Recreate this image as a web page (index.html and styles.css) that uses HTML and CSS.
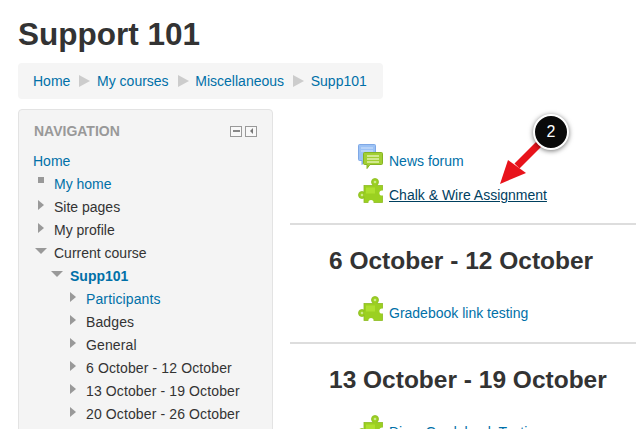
FILE: index.html
```html
<!DOCTYPE html>
<html lang="en">
<head>
    <meta charset="UTF-8">
    <title>Support 101</title>
    <link rel="stylesheet" href="styles.css">
</head>
<body>
    <svg width="0" height="0" class="defs">
        <symbol id="puzzle" viewBox="0 0 25 25">
            <circle cx="17" cy="4" r="3.500" fill="#9bd021" stroke="#8dbb22" stroke-width="0.800"/>
            <circle cx="4" cy="17" r="3.500" fill="#9bd021" stroke="#8dbb22" stroke-width="0.800"/>
            <rect x="6" y="7.500" width="18.500" height="17" fill="#9bd021" stroke="#8dbb22" stroke-width="0.800"/>
            <rect x="15.500" y="6" width="3" height="3" fill="#9bd021"/>
            <rect x="6" y="15.500" width="2" height="3" fill="#9bd021"/>
            <circle cx="17" cy="4" r="1.300" fill="#cdea8a"/>
            <circle cx="4" cy="17" r="1.300" fill="#cdea8a"/>
            <circle cx="24" cy="15" r="2.600" fill="white"/>
            <circle cx="13" cy="24.500" r="2.600" fill="white"/>
            <path d="M8 9.500h9v6H8z" fill="#aee02f"/>
        </symbol>
        <symbol id="forum" viewBox="0 0 25 25">
            <path d="M1.500.5h15a1 1 0 0 1 1 1v14a1 1 0 0 1-1 1H7l-3 4v-4H1.500a1 1 0 0 1-1-1v-14a1 1 0 0 1 1-1z" fill="#9cc2f5" stroke="#7fa8e6"/>
            <path d="M3 4h12M3 7h12" stroke="#d3e4fb" stroke-width="1.200"/>
            <path d="M6.500 8.500h17a1 1 0 0 1 1 1v10a1 1 0 0 1-1 1H12l-3 4v-4H6.500a1 1 0 0 1-1-1v-10a1 1 0 0 1 1-1z" fill="#a2cf33" stroke="#86b422"/>
            <path d="M9 12h12M9 15h12M9 18h12" stroke="#e2f2ae" stroke-width="1.400"/>
        </symbol>
    </svg>

    <h1 class="page-title">Support 101</h1>

    <div class="breadcrumb">
        <a href="#">Home</a><span class="sep"></span>
        <a href="#">My courses</a><span class="sep"></span>
        <a href="#">Miscellaneous</a><span class="sep"></span>
        <a href="#">Supp101</a>
    </div>

    <div class="columns">
        <div class="block">
            <div class="block-head">
                <h2>NAVIGATION</h2>
                <div class="block-actions">
                    <span class="action"><span class="minus"></span></span>
                    <span class="action"><span class="left"></span></span>
                </div>
            </div>
            <div class="tree">
                <div class="row"><a href="#">Home</a></div>
                <div class="row lvl1"><span class="mark square"></span><a href="#">My home</a></div>
                <div class="row lvl1"><span class="mark closed"></span>Site pages</div>
                <div class="row lvl1"><span class="mark closed"></span>My profile</div>
                <div class="row lvl1"><span class="mark open"></span>Current course</div>
                <div class="row lvl2"><span class="mark open"></span><a href="#" class="strong">Supp101</a></div>
                <div class="row lvl3"><span class="mark closed"></span><a href="#">Participants</a></div>
                <div class="row lvl3"><span class="mark closed"></span>Badges</div>
                <div class="row lvl3"><span class="mark closed"></span>General</div>
                <div class="row lvl3"><span class="mark closed"></span>6 October - 12 October</div>
                <div class="row lvl3"><span class="mark closed"></span>13 October - 19 October</div>
                <div class="row lvl3"><span class="mark closed"></span>20 October - 26 October</div>
            </div>
        </div>

        <div class="main">
            <section class="topic first">
                <div class="activity"><svg class="icon"><use href="#forum"/></svg><a href="#">News forum</a></div>
                <div class="activity"><svg class="icon"><use href="#puzzle"/></svg><a href="#" class="hover">Chalk &amp; Wire Assignment</a></div>
            </section>
            <section class="topic">
                <h3>6 October - 12 October</h3>
                <div class="activity"><svg class="icon"><use href="#puzzle"/></svg><a href="#">Gradebook link testing</a></div>
            </section>
            <section class="topic">
                <h3>13 October - 19 October</h3>
                <div class="activity"><svg class="icon"><use href="#puzzle"/></svg><a href="#">Diary Gradebook Testing</a></div>
            </section>
        </div>
    </div>

    <!-- annotation on top of the screenshot -->
    <svg class="callout-arrow" width="90" height="70" viewBox="0 0 90 70">
        <path d="M50 14L20 44" stroke="#e8131b" stroke-width="7" fill="none"/>
        <path d="M3 62L11 38L29 51z" fill="#e8131b"/>
    </svg>
    <div class="callout">2</div>
</body>
</html>
```

FILE: styles.css
```css
* {
    margin: 0;
    padding: 0;
    box-sizing: border-box;
}

html, body {
    height: 429px;
    overflow: hidden;
}

body {
    position: relative;
    padding: 15px 0 0 18px;
    background-color: white;
    color: #333;
    font-family: 'Liberation Sans', Arial, sans-serif;
    font-size: 14px;
}

a {
    color: #0070a8;
    text-decoration: none;
}

.defs {
    position: absolute;
}

.page-title {
    font-size: 31.5px;
    line-height: 38px;
    margin-bottom: 10px;
}

.breadcrumb {
    display: flex;
    align-items: center;
    width: 365px;
    height: 36px;
    padding-left: 15px;
    background-color: #f5f5f5;
    border-radius: 4px;
}

.sep {
    width: 0;
    height: 0;
    margin: 0 6.7px 0 9px;
    border-left: 11px solid #ccc;
    border-top: 6px solid transparent;
    border-bottom: 6px solid transparent;
}

.columns {
    display: flex;
    margin-top: 10px;
}

.block {
    width: 255px;
    height: 340px;
    flex-shrink: 0;
    padding: 0 15px;
    background-color: #f4f4f4;
    border: 1px solid #e3e3e3;
    border-radius: 4px;
}

.block-head {
    display: flex;
    justify-content: space-between;
    align-items: center;
    height: 39px;
    padding-top: 3px;
}

.block-head h2 {
    color: #999;
    font-size: 14px;
    line-height: 20px;
}

.block-actions {
    display: flex;
    gap: 3px;
}

.action {
    display: flex;
    align-items: center;
    justify-content: center;
    width: 12px;
    height: 11px;
    border: 1px solid #999;
    background-color: #f8f8f8;
}

.minus {
    width: 7px;
    height: 2px;
    background-color: #888;
}

.left {
    width: 0;
    height: 0;
    border-right: 3px solid #777;
    border-top: 3px solid transparent;
    border-bottom: 3px solid transparent;
}

.tree {
    margin-left: -1px;
}

.row {
    display: flex;
    align-items: center;
    height: 23px;
    color: #333;
    white-space: nowrap;
}

.lvl1 {
    padding-left: 21px;
}

.lvl2 {
    padding-left: 37px;
}

.lvl3 {
    padding-left: 53px;
    letter-spacing: 0.12px;
}

.mark {
    width: 0;
    height: 0;
    margin-top: -4px;
}

.mark.square {
    width: 6px;
    height: 6px;
    margin-left: -16px;
    margin-right: 10px;
    margin-top: -7px;
    background-color: #999;
}

.mark.closed {
    margin-left: -16px;
    margin-right: 10px;
    border-left: 6px solid #999;
    border-top: 5px solid transparent;
    border-bottom: 5px solid transparent;
}

.mark.open {
    margin-left: -19px;
    margin-right: 7px;
    border-top: 6px solid #999;
    border-left: 6px solid transparent;
    border-right: 6px solid transparent;
}

.strong {
    font-weight: bold;
}

.main {
    flex: 1;
    margin-left: 17px;
}

.topic {
    height: 119px;
    padding-top: 21px;
    border-bottom: 2px solid #ddd;
}

.topic.first {
    height: 116px;
    padding-top: 35px;
}

.topic h3 {
    font-size: 24.5px;
    line-height: 30px;
    padding-left: 39px;
    margin-bottom: 20px;
}

.activity {
    display: flex;
    align-items: center;
    height: 34px;
    padding-left: 68px;
}

.activity .icon {
    width: 25px;
    height: 25px;
    margin-right: 6px;
    margin-top: -9px;
}

.hover {
    color: #00405f;
    text-decoration: underline;
}

.callout-arrow {
    position: absolute;
    left: 497px;
    top: 122px;
}

.callout {
    position: absolute;
    left: 533px;
    top: 114px;
    width: 36px;
    height: 36px;
    border-radius: 50%;
    background-color: #0a0a0a;
    border: 2px solid white;
    box-shadow: 0 1px 5px rgba(0, 0, 0, 0.55);
    color: white;
    font-size: 16px;
    line-height: 32px;
    text-align: center;
}
```
